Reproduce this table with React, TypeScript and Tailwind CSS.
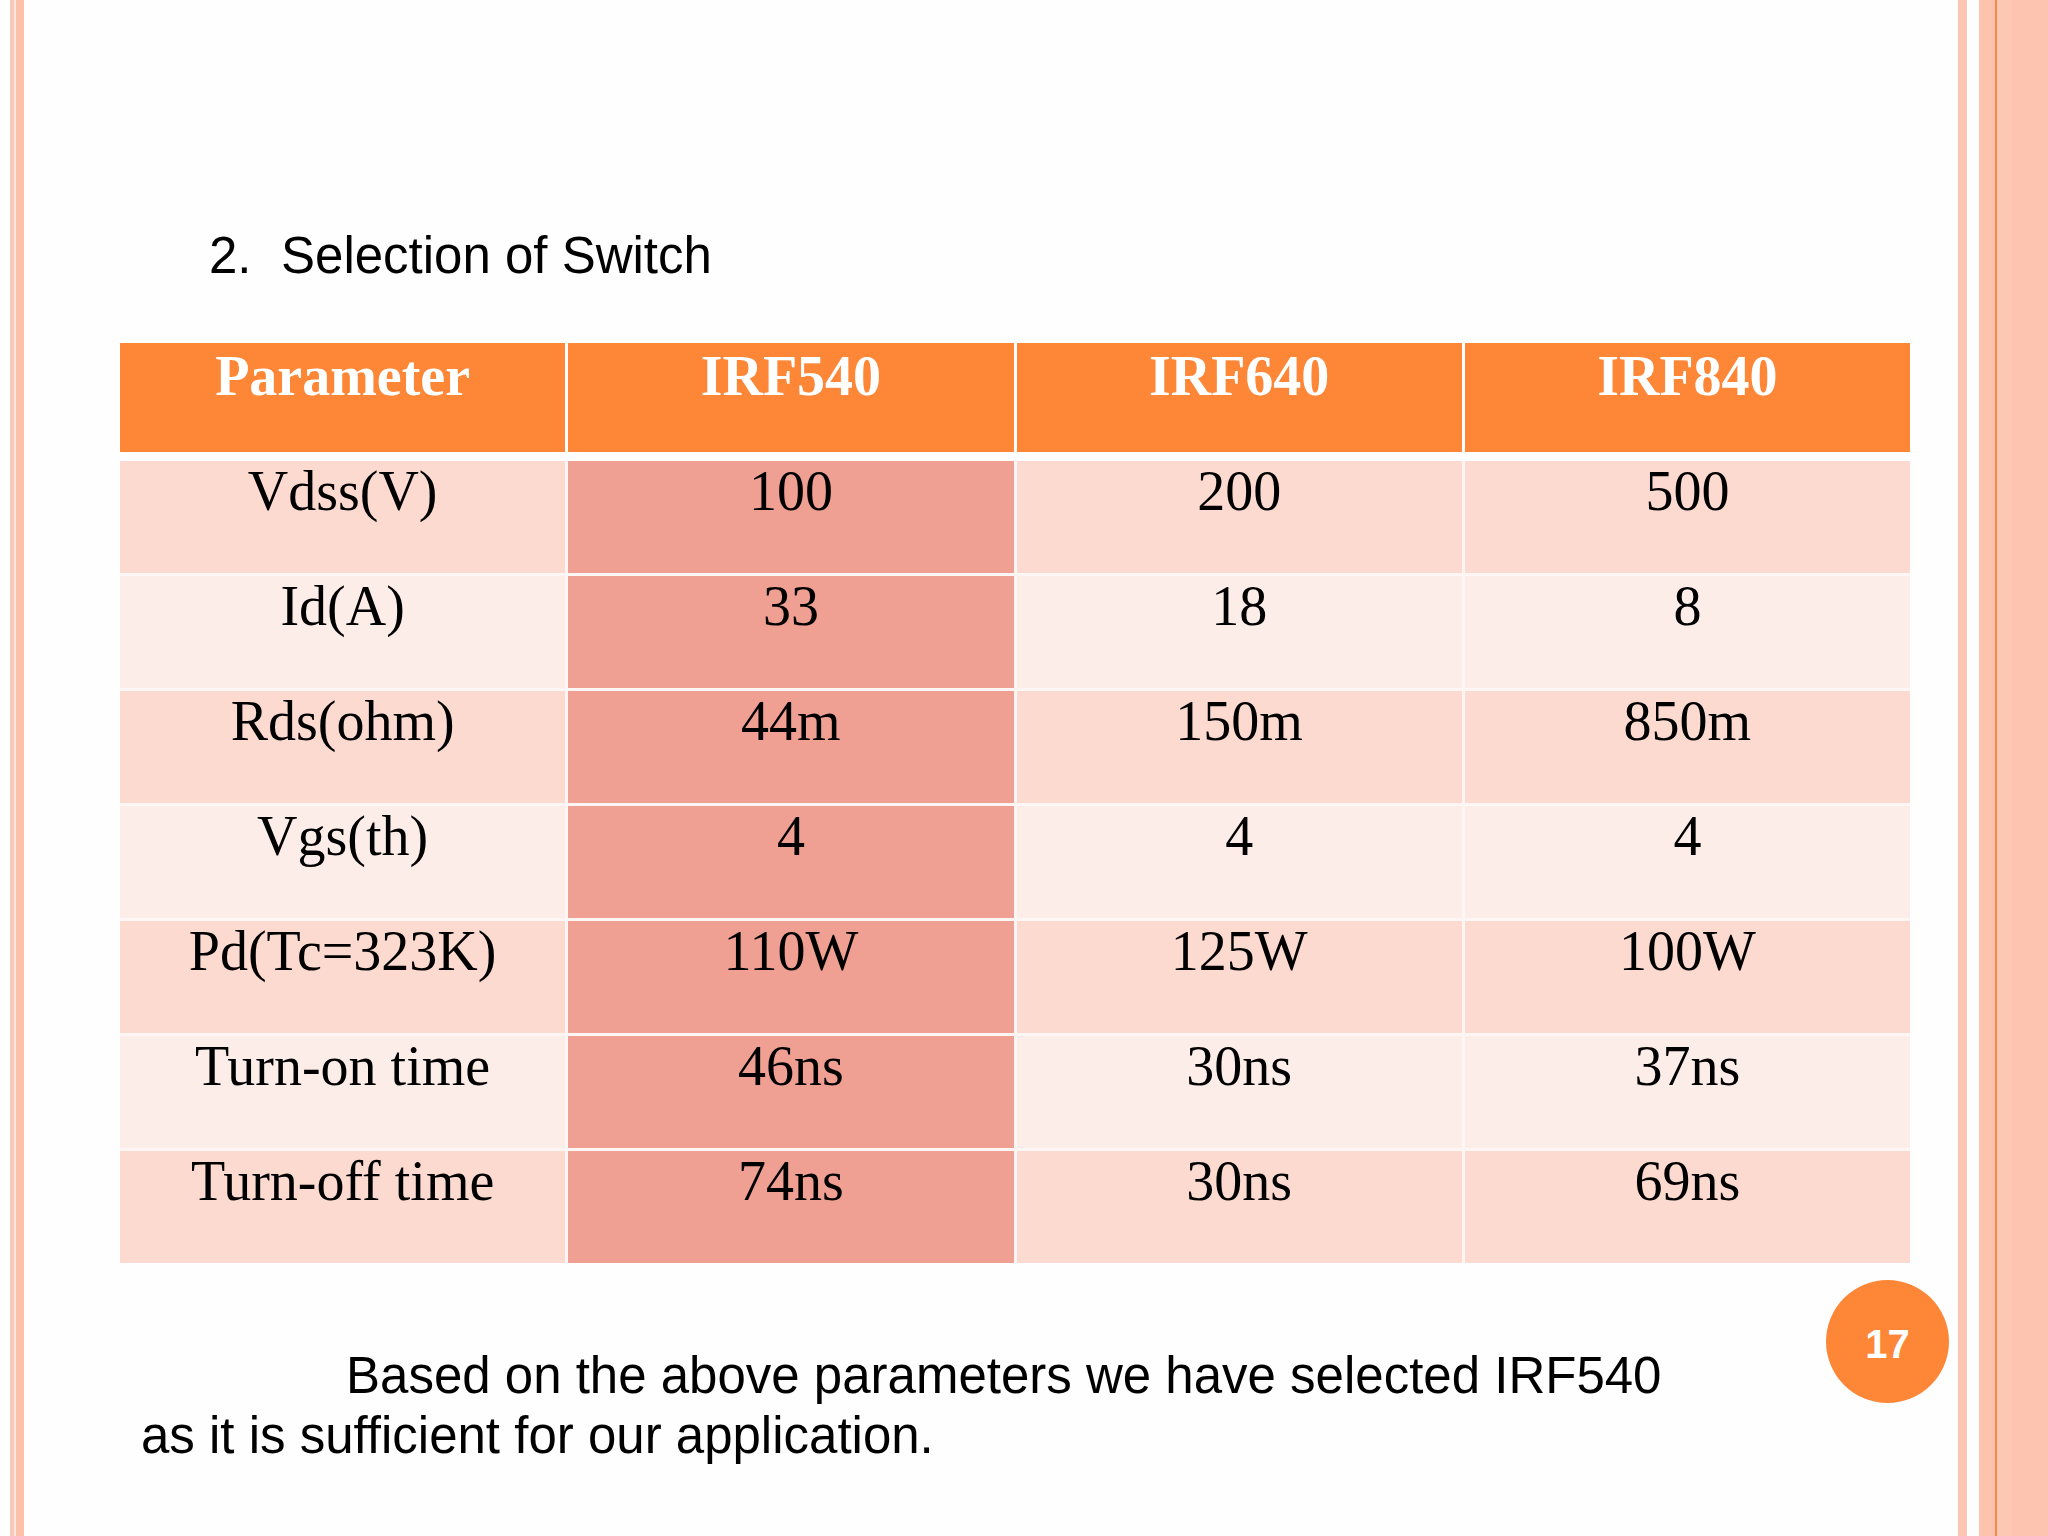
import React from "react";

const columns = ["Parameter", "IRF540", "IRF640", "IRF840"];

const rows = [
  ["Vdss(V)", "100", "200", "500"],
  ["Id(A)", "33", "18", "8"],
  ["Rds(ohm)", "44m", "150m", "850m"],
  ["Vgs(th)", "4", "4", "4"],
  ["Pd(Tc=323K)", "110W", "125W", "100W"],
  ["Turn-on time", "46ns", "30ns", "37ns"],
  ["Turn-off time", "74ns", "30ns", "69ns"],
];

const serif = "font-['Liberation_Serif','Times_New_Roman',serif]";
const sans = "font-['Liberation_Sans',Arial,sans-serif]";

const SelectionSlide = () => {
  return (
    <div className="relative flex h-[1536px] w-[2048px] overflow-hidden bg-[#fefefe]">
      {/* left edge stripes */}
      <div className="w-[10px] shrink-0" />
      <div className="w-[4px] shrink-0 bg-[#f7c9bd]" />
      <div className="w-[2px] shrink-0 bg-[#fde6dc]" />
      <div className="w-[8px] shrink-0 bg-[#fcc1a8]" />

      <div className="flex flex-1 flex-col">
        <h2 className={`${sans} ml-[185px] mt-[230px] flex text-[51px] leading-none font-normal text-black`}>
          <span className="w-[72px]">2.</span>
          <span>Selection of Switch</span>
        </h2>

        <div className={`${serif} ml-[96px] mt-[62px] w-[1790px] text-[56px] leading-none`}>
          <div className="grid grid-cols-4 gap-x-[3px]">
            {columns.map((c) => (
              <div key={c} className="h-[109px] bg-[#fd8637] pt-[5px] text-center font-bold text-white">
                {c}
              </div>
            ))}
          </div>
          <div className="mt-[9px] grid grid-cols-4 gap-x-[3px] gap-y-[3px] bg-[#fdf6f4]">
            {rows.map((r, i) =>
              r.map((cell, j) => {
                const bg =
                  j === 1 ? "bg-[#f0a092]" : i % 2 === 0 ? "bg-[#fcdad0]" : "bg-[#fdede9]";
                return (
                  <div key={`${i}-${j}`} className={`h-[112px] pt-[2px] text-center text-black ${bg}`}>
                    {cell}
                  </div>
                );
              })
            )}
          </div>
        </div>

        <p className={`${sans} ml-[117px] mt-[83px] indent-[205px] text-[51px] leading-[60px] text-black`}>
          Based on the above parameters we have selected IRF540
          <br />
          as it is sufficient for our application.
        </p>
      </div>

      {/* right edge stripes */}
      <div className="w-[9px] shrink-0 bg-[#fcc6b2]" />
      <div className="w-[12px] shrink-0" />
      <div className="w-[16px] shrink-0 bg-[#fdc3ad]" />
      <div className="w-[2px] shrink-0 bg-[#f58a4e]" />
      <div className="w-[15px] shrink-0 bg-[#fcc8b4]" />
      <div className="w-[36px] shrink-0 bg-[#fdc5b0]" />

      {/* page number badge */}
      <div
        className={`${sans} absolute left-[1826px] top-[1280px] flex h-[123px] w-[123px] items-center justify-center rounded-full bg-[#fd8637] pt-[4px] text-[40px] font-bold text-white`}
      >
        17
      </div>
    </div>
  );
};

export default SelectionSlide;
